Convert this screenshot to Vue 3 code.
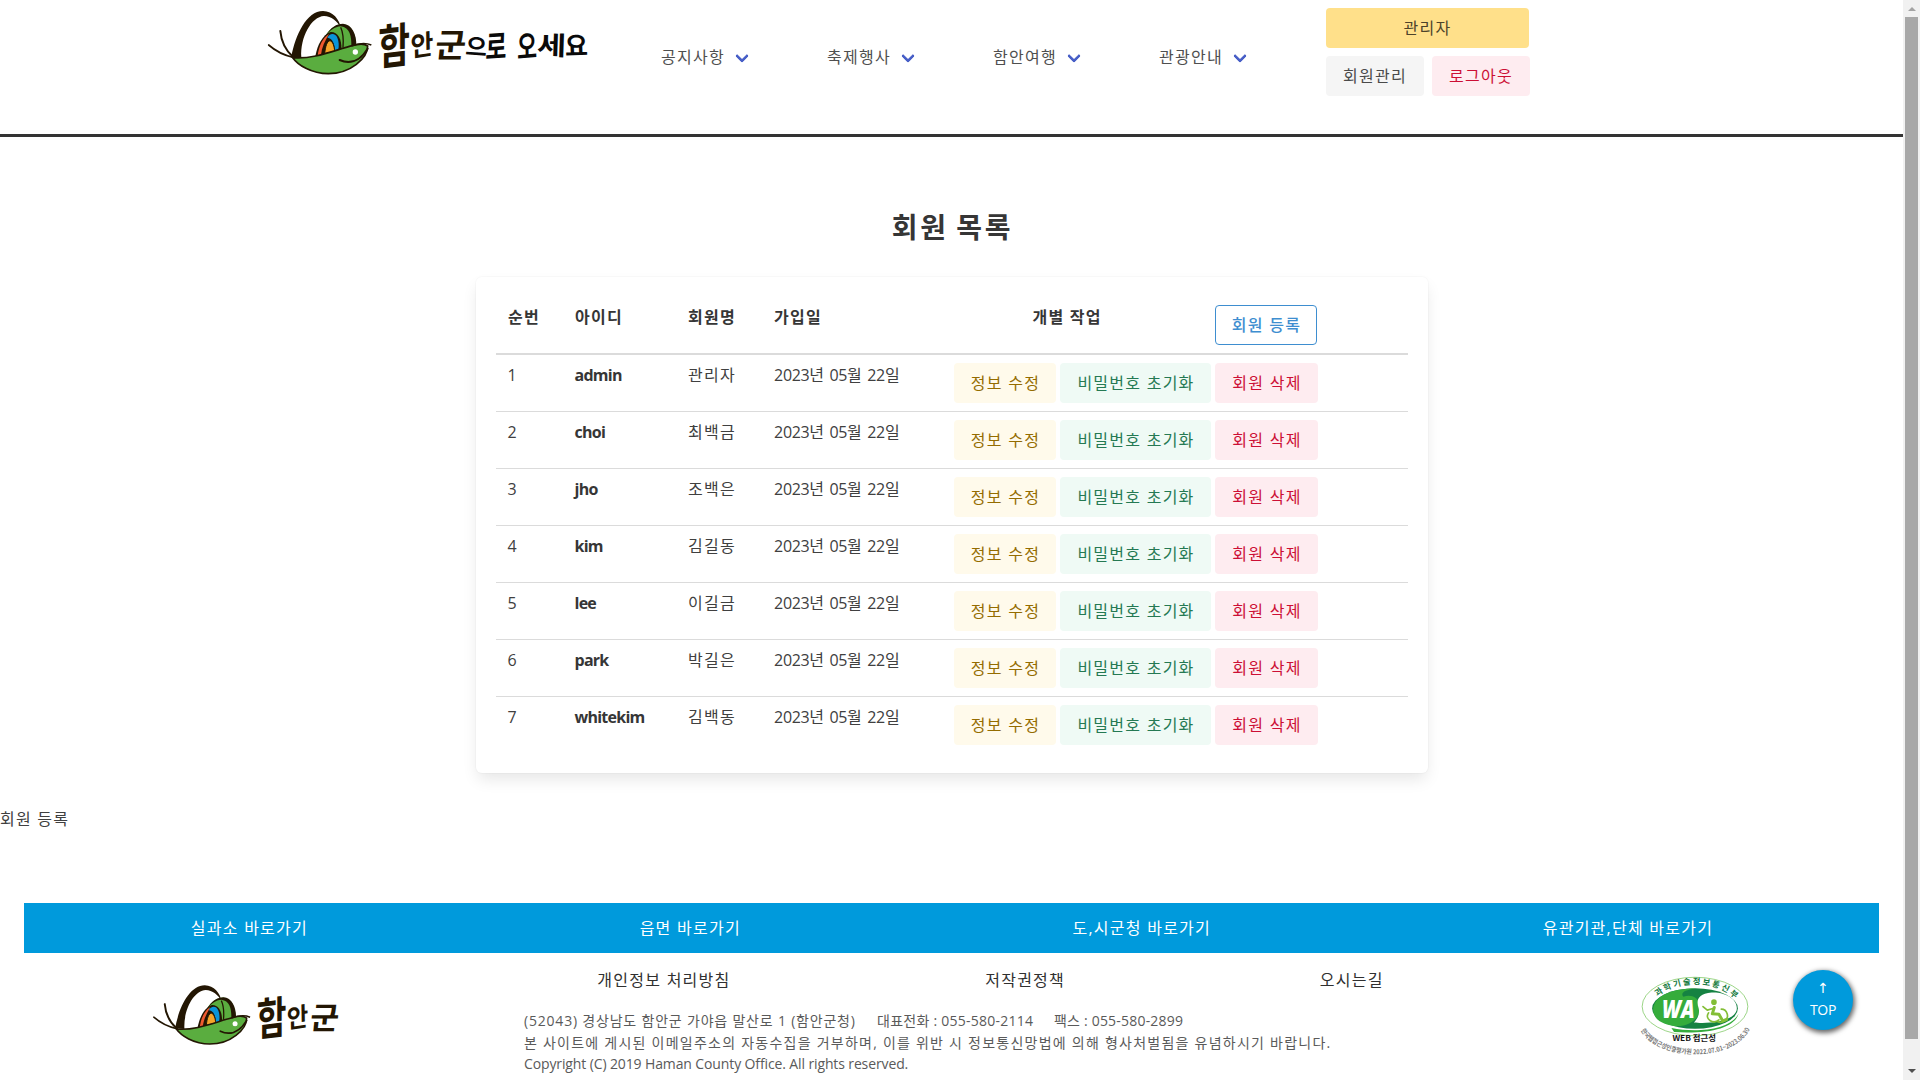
<script setup>
const menus = ['공지사항', '축제행사', '함안여행', '관광안내']

const members = [
  { id: 'admin', name: '관리자' },
  { id: 'choi', name: '최백금' },
  { id: 'jho', name: '조백은' },
  { id: 'kim', name: '김길동' },
  { id: 'lee', name: '이길금' },
  { id: 'park', name: '박길은' },
  { id: 'whitekim', name: '김백동' },
]

const shortcuts = ['실과소 바로가기', '읍면 바로가기', '도,시군청 바로가기', '유관기관,단체 바로가기']
const policies = ['개인정보 처리방침', '저작권정책', '오시는길']
</script>

<template>
  <div class="window">
    <div class="page">
      <header class="header">
        <svg class="logo" viewBox="0 0 1080 300" role="img" aria-label="함안군으로 오세요">
          <defs>
            <g id="haman-mark">
              <g fill="none" stroke="#231603" stroke-linecap="round">
                <path d="M56 135Q88 163 130 172" stroke-width="5" />
                <path d="M91 93Q95 141 130 172" stroke-width="6" />
              </g>
              <path d="M124 171C136 105 170 33 219 33C249 34 268 58 273 84C262 64 244 48 222 48C184 50 150 112 154 173Z" fill="#231603" />
              <path d="M226 108C240 84 260 72 278 72C304 74 318 103 318 134L250 150Z" fill="#5aad3f" />
              <path d="M226 108C242 82 260 71 279 71C306 73 320 103 319 136L304 139C305 110 300 82 272 79C254 80 240 92 226 108Z" fill="#231603" />
              <path d="M196 169C202 135 218 104 242 96C262 95 276 116 274 148Z" fill="#231603" />
              <path d="M203 167C207 139 217 114 237 102C225 123 215 143 213 165Z" fill="#ef5a30" />
              <path d="M232 113C238 99 256 97 262 113C267 125 267 137 265 150L255 152C254 132 248 114 232 113Z" fill="#0b94d8" />
              <path d="M224 161C226 140 231 123 240 122C249 124 253 140 254 154Z" fill="#f6a52b" stroke="#231603" stroke-width="3" />
              <path d="M272 82C280 99 281 119 279 143" fill="none" stroke="#231603" stroke-width="4" />
              <path d="M128 173C190 179 252 151 306 137C326 131 344 131 353 138C353 174 302 221 235 221C183 221 143 194 128 173Z" fill="#5aad3f" stroke="#231603" stroke-width="5" />
              <path d="M304 138C328 129 345 127 364 135" fill="none" stroke="#231603" stroke-width="5" />
              <path d="M269 180C295 192 327 188 353 146" fill="none" stroke="#231603" stroke-width="6" stroke-linecap="round" />
              <circle cx="316" cy="156" r="8" fill="#fff" />
              <g class="brush" fill="#231603">
                <text transform="translate(385 196) rotate(-7) skewX(-7) scale(.84 1.14)" font-size="124">함</text>
                <text transform="translate(482 171) rotate(-9) skewX(-8) scale(.92 1)" font-size="82">안</text>
                <text transform="translate(553 172) skewX(-6) scale(1.02 1)" font-size="98">군</text>
              </g>
            </g>
          </defs>
          <use href="#haman-mark" />
          <g class="brush" fill="#0a0a0a">
            <text transform="translate(645 164) rotate(4) scale(.9 .9)" font-size="78">으</text>
            <text transform="translate(706 178) rotate(-4) skewX(-6) scale(.78 1.1)" font-size="88">로</text>
            <text transform="translate(802 178) rotate(-5) skewX(-4) scale(.74 1.08)" font-size="88">오</text>
            <text transform="translate(860 163) rotate(2) scale(1.08 .88)" font-size="88">세</text>
            <text transform="translate(946 168) rotate(-2) scale(.9 .95)" font-size="83">요</text>
          </g>
        </svg>
        <nav class="nav">
          <a v-for="menu in menus" :key="menu" class="nav-item">{{ menu }}<i class="chevron"></i></a>
        </nav>
        <div class="account">
          <a class="button warning">관리자</a>
          <div class="account-row">
            <a class="button light">회원관리</a>
            <a class="button danger">로그아웃</a>
          </div>
        </div>
      </header>

      <main class="main">
        <h1 class="title">회원 목록</h1>
        <section class="box">
          <table class="table">
            <colgroup>
              <col class="c-no" />
              <col class="c-id" />
              <col class="c-name" />
              <col class="c-date" />
              <col class="c-work" />
              <col />
            </colgroup>
            <thead>
              <tr>
                <th>순번</th>
                <th>아이디</th>
                <th>회원명</th>
                <th>가입일</th>
                <th class="work">개별 작업</th>
                <th class="add"><a class="button outlined">회원 등록</a></th>
              </tr>
            </thead>
            <tbody>
              <tr v-for="(member, index) in members" :key="member.id">
                <td class="num">{{ index + 1 }}</td>
                <td class="id">{{ member.id }}</td>
                <td>{{ member.name }}</td>
                <td class="date"><b>2023</b>년 <b>05</b>월 <b>22</b>일</td>
                <td class="ops" colspan="2">
                  <div class="actions">
                    <a class="button edit">정보 수정</a>
                    <a class="button reset">비밀번호 초기화</a>
                    <a class="button danger remove">회원 삭제</a>
                  </div>
                </td>
              </tr>
            </tbody>
          </table>
        </section>
        <p class="register">회원 등록</p>
      </main>

      <footer class="footer">
        <div class="shortcuts">
          <a v-for="item in shortcuts" :key="item">{{ item }}</a>
        </div>
        <div class="footer-body">
          <svg class="footer-logo" viewBox="0 0 670 240" role="img" aria-label="함안군">
            <use href="#haman-mark" />
          </svg>
          <div class="info">
            <div class="policies">
              <a v-for="item in policies" :key="item">{{ item }}</a>
            </div>
            <div class="address">
              <p class="contact">
                <span class="place">(52043) 경상남도 함안군 가야읍 말산로 1 (함안군청)</span>
                <span class="tel">대표전화 : 055-580-2114</span>
                <span class="fax">팩스 : 055-580-2899</span>
              </p>
              <p class="notice">본 사이트에 게시된 이메일주소의 자동수집을 거부하며, 이를 위반 시 정보통신망법에 의해 형사처벌됨을 유념하시기 바랍니다.</p>
              <p class="copyright">Copyright (C) 2019 Haman County Office. All rights reserved.</p>
            </div>
          </div>
          <svg class="wa" viewBox="0 0 450 370" role="img" aria-label="WEB 접근성">
            <defs>
              <path id="wa-top" d="M106 146A138 86 0 0 1 352 156" />
              <path id="wa-bottom" d="M62 242C112 334 338 342 389 240" />
            </defs>
            <ellipse cx="225" cy="170" rx="159" ry="88" fill="#fff" stroke="#6abf4a" stroke-width="2" />
            <ellipse cx="225" cy="176" rx="129" ry="61" fill="#158242" />
            <path d="M99 182C99 134 165 116 225 116C195 121 180 128 190 141C216 131 242 146 240 176C238 206 210 231 165 229C124 224 101 207 99 182Z" fill="#35ac3b" />
            <path d="M222 218C250 222 338 220 350 182C358 146 310 125 275 128C233 131 228 153 236 175C240 192 233 206 222 218Z" fill="#fff" />
            <path d="M154 235C230 250 330 241 356 192C343 235 270 253 162 247Z" fill="#35ac3b" />
            <text class="wa-text" x="126" y="206" font-size="76" textLength="98" lengthAdjust="spacingAndGlyphs" fill="#fff">WA</text>
            <g fill="none" stroke="#83be36" stroke-width="9" stroke-linecap="round" stroke-linejoin="round">
              <circle cx="282" cy="157" r="5" fill="#83be36" stroke-width="7" />
              <path d="M283 173L277 192L297 193L308 213L320 209" />
              <path d="M279 176L262 181L249 170" stroke-width="5" />
              <path d="M266 189C252 207 280 225 297 210M304 178C322 178 330 203 314 214C305 220 295 218 291 214" stroke-width="5" />
            </g>
            <text class="ring" font-size="25" fill="#157b40"><textPath href="#wa-top" startOffset="8" textLength="252">과학기술정보통신부</textPath></text>
            <text class="ring" x="157" y="274" font-size="23" textLength="131" lengthAdjust="spacingAndGlyphs" fill="#151515">WEB 접근성</text>
            <text class="ring" font-size="20" fill="#777"><textPath href="#wa-bottom" textLength="376" lengthAdjust="spacingAndGlyphs">한국웹접근성인증평가원 2022.07.01~2023.06.30</textPath></text>
          </svg>
        </div>
      </footer>

      <a class="top"><span class="arrow">↑</span><span>TOP</span></a>
    </div>

    <div class="scrollbar">
      <i class="up"></i>
      <div class="thumb"></div>
      <i class="down"></i>
    </div>
  </div>
</template>

<style>
html,
body {
  margin: 0;
  overflow: hidden;
  background: #fff;
}
</style>

<style scoped>
* {
  box-sizing: border-box;
}

.window {
  display: flex;
  width: 1920px;
  height: 1080px;
  overflow: hidden;
  color: #404040;
  font: 400 16px/24px "Open Sans", "Noto Sans CJK KR", sans-serif;
  letter-spacing: 1.25px;
}

.page {
  position: relative;
  display: flex;
  flex-direction: column;
  width: 1903px;
}

.header {
  display: flex;
  align-items: flex-start;
  height: 137px;
  border-bottom: 3px solid #333;
}

.logo {
  flex: none;
  width: 360px;
  height: 100px;
  margin-left: 250px;
}

.brush {
  font-family: "Noto Sans CJK KR", sans-serif;
  font-weight: 700;
  letter-spacing: 0;
}

.nav {
  display: flex;
  gap: 50px;
  margin: 37px 0 0 39px;
}

.nav-item {
  position: relative;
  width: 116px;
  padding: 8px 0 8px 12px;
  color: #4f4f4f;
}

.chevron {
  position: absolute;
  top: 14px;
  right: 18px;
  width: 10px;
  height: 10px;
  border: 3px solid #485fc7;
  border-top: 0;
  border-right: 0;
  border-radius: 2px;
  transform: rotate(-45deg);
}

.account {
  display: flex;
  flex-direction: column;
  gap: 8px;
  margin: 8px 0 0 63px;
}

.account-row {
  display: flex;
  gap: 8px;
}

.account-row .button {
  width: 98px;
  padding-left: 0;
}

.button {
  display: flex;
  align-items: center;
  justify-content: center;
  height: 40px;
  padding-left: 2px;
  border-radius: 4px;
  font-weight: 400;
  white-space: nowrap;
}

.warning {
  width: 203px;
  padding-left: 0;
  background: #ffe08a;
  color: #4d432a;
}

.light {
  background: #f5f5f5;
  color: #4a4a4a;
}

.danger {
  background: #feecf0;
  color: #cc0f35;
}

.edit {
  width: 102px;
  background: #fffaeb;
  color: #946c00;
}

.reset {
  width: 151px;
  background: #effaf5;
  color: #257953;
}

.remove {
  width: 103px;
}

.outlined {
  width: 102px;
  border: 1px solid #3e8ed0;
  color: #3e8ed0;
  font-weight: 500;
}

.main {
  height: 766px;
}

.title {
  margin: 70px 0 30px;
  padding-left: 2px;
  color: #363636;
  font-size: 28px;
  line-height: 40px;
  font-weight: 700;
  letter-spacing: 2.7px;
  word-spacing: -2.5px;
  text-align: center;
}

.box {
  width: 952px;
  height: 496px;
  margin: 0 auto;
  padding: 20px;
  border-radius: 6px;
  background: #fff;
  box-shadow: 0 8px 16px -2px rgba(10, 10, 10, 0.1), 0 0 0 1px rgba(10, 10, 10, 0.02);
}

.table {
  width: 912px;
  border-collapse: separate;
  border-spacing: 0;
  table-layout: fixed;
}

.c-no {
  width: 67px;
}

.c-id {
  width: 113px;
}

.c-name {
  width: 86px;
}

.c-date {
  width: 180px;
}

.c-work {
  width: 261px;
}

th,
td {
  height: 57px;
  padding: 8px 12px 8px 12.6px;
  border-bottom: 1px solid #dbdbdb;
  text-align: left;
  vertical-align: top;
  white-space: nowrap;
}

th {
  height: 58px;
  border-bottom-width: 2px;
  color: #363636;
  font-weight: 600;
}

.work {
  padding-left: 91px;
}

.add,
.ops {
  padding-left: 12px;
}

tbody tr:last-child td {
  height: 56px;
  border-bottom: 0;
}

.num {
  padding-left: 12px;
  letter-spacing: 0;
}

.id {
  padding-left: 12px;
  color: #363636;
  font-weight: 700;
  letter-spacing: -0.75px;
}

.date {
  word-spacing: -1.2px;
}

.date b {
  font-weight: 400;
  letter-spacing: -0.35px;
}

.actions {
  display: flex;
  gap: 4px;
}

.register {
  margin: 34px 0 0;
}

.shortcuts {
  display: flex;
  align-items: center;
  justify-content: space-around;
  width: 1855px;
  height: 50px;
  margin-left: 24px;
  padding-left: 1px;
  background: #009adc;
  color: #fff;
}

.footer-body {
  display: flex;
  align-items: flex-start;
  height: 127px;
}

.footer-logo {
  flex: none;
  width: 210px;
  height: 75px;
  margin: 22px 0 0 136px;
}

.info {
  flex: none;
  width: 1042px;
  margin-left: 123px;
}

.policies {
  display: flex;
  justify-content: space-around;
  padding: 15px 0 0 1px;
  color: #303030;
}

.address {
  margin-top: 18px;
  padding-left: 55px;
  color: #5a5a5a;
  font-size: 14px;
  line-height: 21.7px;
  white-space: nowrap;
}

.address p {
  margin: 0;
}

.contact {
  display: flex;
}

.place {
  width: 353px;
  letter-spacing: 0.8px;
}

.tel {
  width: 177px;
  letter-spacing: 0.25px;
}

.fax {
  letter-spacing: 0.2px;
}

.notice {
  letter-spacing: 1.24px;
}

.copyright {
  letter-spacing: -0.12px;
}

.wa {
  flex: none;
  width: 150px;
  height: 123px;
  margin: -3px 0 0 109px;
}

.wa-text {
  font-family: "Open Sans", sans-serif;
  font-style: italic;
  font-weight: 800;
  letter-spacing: 0;
}

.ring {
  font-family: "Noto Sans CJK KR", sans-serif;
  font-weight: 700;
  letter-spacing: 0;
}

.top {
  position: absolute;
  left: 1793px;
  top: 970px;
  display: flex;
  flex-direction: column;
  align-items: center;
  width: 60px;
  height: 60px;
  padding-top: 8px;
  border-radius: 50%;
  background: #009adc;
  box-shadow: 1px 2px 5px 1px rgba(0, 0, 0, 0.6);
  color: #fff;
  font-size: 14px;
  line-height: 21px;
  letter-spacing: -0.3px;
}

.arrow {
  font-family: "DejaVu Sans", sans-serif;
}

.scrollbar {
  display: flex;
  flex-direction: column;
  align-items: center;
  width: 17px;
  height: 1080px;
  background: #f1f1f1;
}

.up {
  margin-top: 7px;
  border: 4px solid transparent;
  border-top: 0;
  border-bottom-color: #a3a3a3;
}

.thumb {
  width: 13px;
  height: 1022px;
  margin-top: 6px;
  background: #a8a8a8;
}

.down {
  margin-top: 30px;
  border: 4px solid transparent;
  border-bottom: 0;
  border-top-color: #505050;
}
</style>
